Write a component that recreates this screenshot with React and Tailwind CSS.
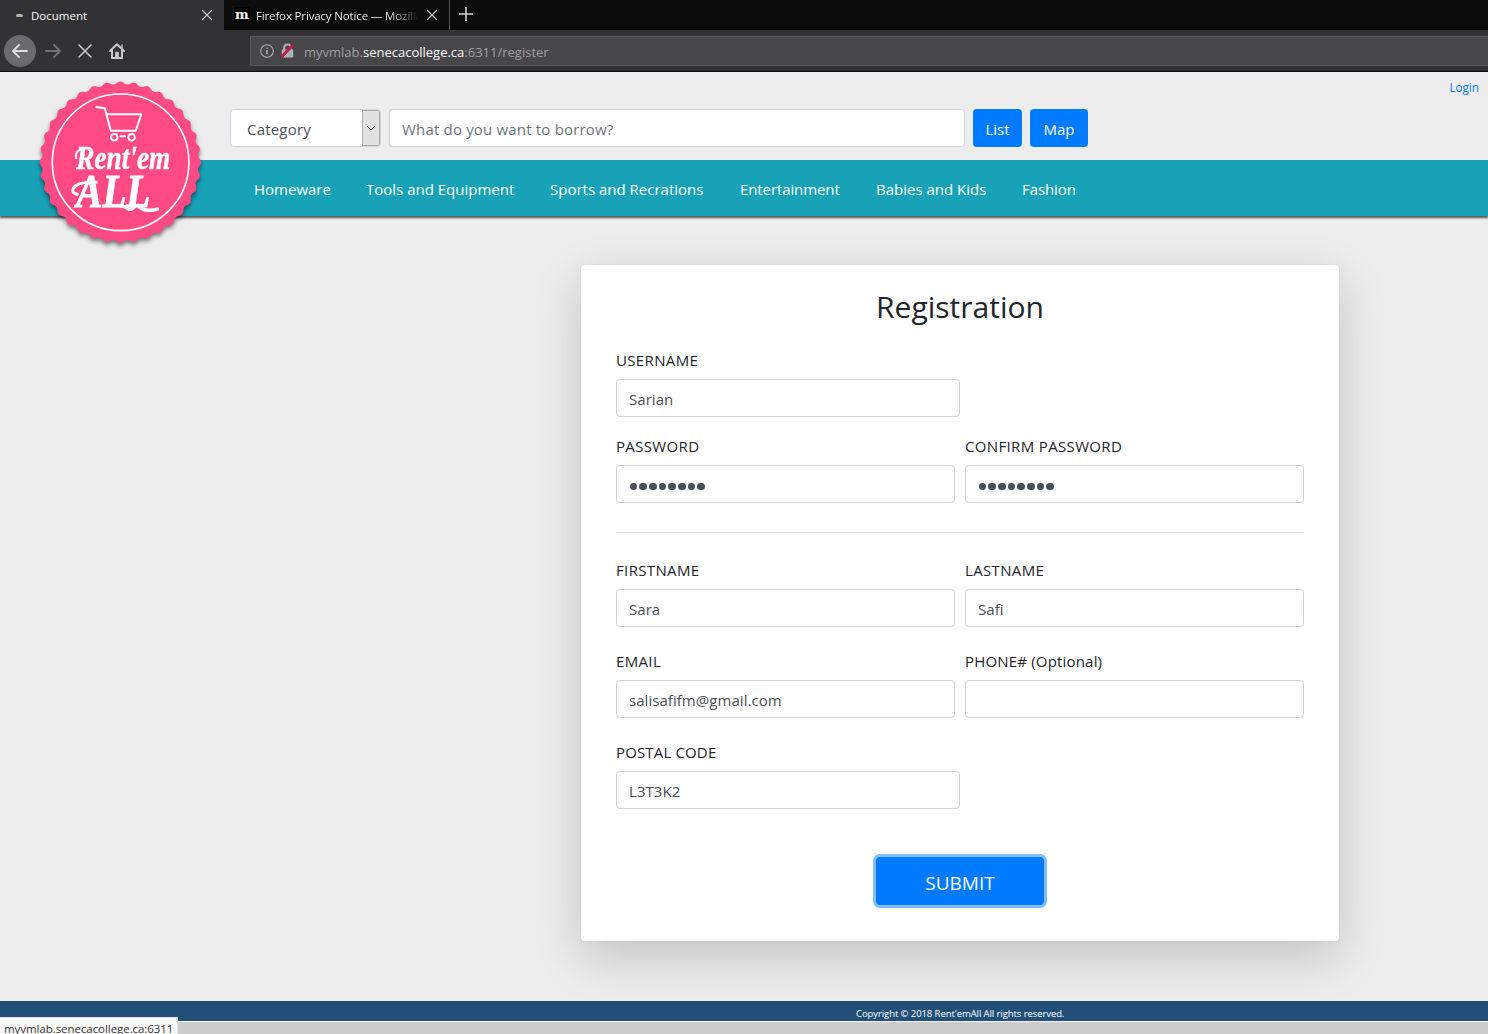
import React from "react";

const badgePoints = Array.from({ length: 432 }, (_, i) => {
  const a = (i / 432) * Math.PI * 2;
  const r = 79.4 + 1.4 * Math.cos(a * 36);
  return `${(90 + r * Math.sin(a)).toFixed(2)},${(90 - r * Math.cos(a)).toFixed(2)}`;
}).join(" ");

function Cross({ className }) {
  return (
    <svg className={className} viewBox="0 0 16 16" fill="none" stroke="currentColor" strokeLinecap="round">
      <path d="M2 2L14 14M14 2L2 14" strokeWidth="1.6" />
    </svg>
  );
}

function Logo() {
  return (
    <svg className="absolute left-[30px] top-0 h-[186px] w-[186px] drop-shadow-[0_3px_2px_rgba(0,0,0,0.5)]" viewBox="-0.3 -0.3 186 186">
      <polygon points={badgePoints} fill="#ff4a84" />
      <circle cx="90.3" cy="90" r="68.3" fill="none" stroke="#fff" strokeWidth="1.6" />
      <g fill="none" stroke="#fff" strokeWidth="2" strokeLinecap="round" strokeLinejoin="round">
        <path d="M66 34.8L74.5 36L80.5 58.5H105.5L111 42H76.8" />
        <circle cx="84" cy="65" r="3.3" />
        <circle cx="101.3" cy="65" r="3.3" />
        <path d="M90.3 64H94.7" />
      </g>
      <g fill="#fff" stroke="#fff" fontFamily="Liberation Serif, serif" fontStyle="italic" fontWeight="700">
        <text x="46" y="96.5" fontSize="33" strokeWidth="0.5" textLength="94" lengthAdjust="spacingAndGlyphs">Rent'em</text>
        <text x="46" y="134.5" fontSize="46" strokeWidth="1" textLength="74" lengthAdjust="spacingAndGlyphs">ALL</text>
      </g>
      <g fill="none" stroke="#fff" strokeLinecap="round">
        <path d="M46 86Q44 77 56 76" strokeWidth="2" />
        <path d="M47 122Q41 121 43 116Q47 109 66 110" strokeWidth="3" />
        <path d="M86 133Q93 133 97 136Q102 139 105 133" strokeWidth="3.2" />
        <path d="M108 133Q112 140 127 137" strokeWidth="3.6" />
      </g>
    </svg>
  );
}

function Browser() {
  return (
    <div className="h-[72px] shrink-0 border-b border-[#0c0c0d] bg-[#323234]">
      <div className="flex h-[30px] bg-[#0c0c0d] text-[11.5px] text-[#f9f9fa]">
        <div className="flex w-[224px] items-center bg-[#323234] pl-4 pr-[11px]">
          <span className="mr-2 h-[3px] w-[7px] rounded-full bg-[#b1b1b3]" />
          <span className="flex-1 pt-[2px]">Document</span>
          <Cross className="h-3 w-3 text-[#c8c8ca]" />
        </div>
        <div className="flex w-[226px] items-center border-r border-[#55555a] pl-[10px] pr-[10px]">
          <span className="mr-[6px] flex h-4 w-4 items-center justify-center bg-black pb-[2px] font-['DejaVu_Serif',serif] text-[13px] font-bold leading-none">m</span>
          <span className="w-[163px] overflow-hidden whitespace-nowrap bg-linear-to-r from-white from-82% to-transparent bg-clip-text pt-[2px] tracking-[-0.15px] text-transparent">Firefox Privacy Notice — Mozilla</span>
          <Cross className="ml-[7px] h-3 w-3 shrink-0 text-[#c8c8ca]" />
        </div>
        <svg className="ml-2 mt-[6px] h-4 w-4 text-[#d0d0d2]" viewBox="0 0 16 16" fill="none" stroke="currentColor" strokeWidth="1.6"><path d="M8 1V15M1 8H15" /></svg>
      </div>
      <div className="flex h-[41px] items-center pl-1">
        <div className="flex h-8 w-8 items-center justify-center rounded-full bg-[#6b6b6d] text-[#dededf]">
          <svg className="h-4 w-4" viewBox="0 0 16 16" fill="none" stroke="currentColor" strokeWidth="1.8" strokeLinecap="round" strokeLinejoin="round"><path d="M15 8H1M7 2L1 8L7 14" /></svg>
        </div>
        <svg className="ml-[9px] h-4 w-4 text-[#737375]" viewBox="0 0 16 16" fill="none" stroke="currentColor" strokeWidth="1.8" strokeLinecap="round" strokeLinejoin="round"><path d="M1 8H15M9 2L15 8L9 14" /></svg>
        <Cross className="ml-4 h-4 w-4 text-[#c8c8ca]" />
        <svg className="ml-4 h-4 w-4 text-[#c8c8ca]" viewBox="0 0 16 16" fill="none" stroke="currentColor" strokeWidth="2" strokeLinejoin="round" strokeLinecap="round">
          <path d="M1 8L8 1.2L15 8M3 7.5V15H13V7.5" />
          <path d="M6.7 14V9.2H9.3V14" fill="currentColor" strokeWidth="1" />
          <path d="M13 2V5" strokeWidth="1.4" />
        </svg>
        <div className="ml-[125px] flex h-[30px] flex-1 items-center border border-r-0 border-[#59595b] bg-[#474749] pl-[9px]">
          <svg className="h-[14px] w-[14px] text-[#b1b1b3]" viewBox="0 0 14 14" fill="none" stroke="currentColor"><circle cx="7" cy="7" r="6.3" strokeWidth="1.1" /><path d="M7 6V10.3M7 3.4V4.8" strokeWidth="1.6" /></svg>
          <svg className="ml-[6px] h-[15px] w-[15px]" viewBox="0 0 15 15" fill="none">
            <path d="M4.2 7V4.7Q4.2 1.5 7.5 1.5Q10.8 1.5 10.8 4.7V7" stroke="#b1b1b3" strokeWidth="2" />
            <rect x="1.7" y="6.5" width="11.6" height="8" rx="1" fill="#b1b1b3" />
            <path d="M2 15L14.2 2.2" stroke="#474749" strokeWidth="1" />
            <path d="M1 14L13.5 1" stroke="#d70b42" strokeWidth="2.2" />
          </svg>
          <span className="ml-[9px] pt-[4px] text-[13px] text-[#a0a0a2]"><span>myvmlab.</span><span className="text-[#f9f9fa]">senecacollege.ca</span><span>:6311/register</span></span>
        </div>
      </div>
    </div>
  );
}

const links = [
  ["Homeware", "w-[76px]"],
  ["Tools and Equipment", "w-[148px]"],
  ["Sports and Recrations", "w-[154px]"],
  ["Entertainment", "w-[100px] tracking-[-0.1px]"],
  ["Babies and Kids", "w-[110px]"],
  ["Fashion", "w-[54px] tracking-[-0.1px]"],
];

function Header() {
  return (
    <header className="relative h-[145px] shrink-0">
      <a className="absolute right-[9px] top-[6px] text-[11.7px] leading-[18px] text-[#007bff]">Login</a>
      <div className="flex h-[88px] items-start pl-[230px] pt-[37px] text-[15px]">
        <div className="flex h-[38px] w-[151px] overflow-hidden rounded-[4px] border border-[#ced4da] bg-white text-[#495057]">
          <span className="flex-1 pl-4 leading-[38px] tracking-[0.2px]">Category</span>
          <span className="flex w-[18px] items-center justify-center border border-[#a9a9ab] bg-[#e1e1e1]">
            <svg className="h-2 w-[10px]" viewBox="0 0 10 8" fill="none" stroke="#444"><path d="M1 2L5 6L9 2" /></svg>
          </span>
        </div>
        <div className="ml-2 h-[38px] w-[576px] rounded-[4px] border border-[#ced4da] bg-white pl-3 leading-[38px] tracking-[0.18px] text-[#6c757d]">What do you want to borrow?</div>
        <button className="ml-2 h-[38px] w-[49px] rounded-[4px] bg-[#007bff] pt-[3px] text-white">List</button>
        <button className="ml-2 h-[38px] w-[58px] rounded-[4px] bg-[#007bff] pt-[3px] text-white">Map</button>
      </div>
      <nav className="flex h-14 items-center gap-9 bg-[#17a2b8] pl-[254px] pt-[3px] text-[15px] text-white shadow-[0_2px_2px_rgba(0,0,0,0.65)]">
        {links.map(([text, width]) => <a key={text} className={`${width} whitespace-nowrap`}>{text}</a>)}
      </nav>
      <Logo />
    </header>
  );
}

function Field({ label, value, type = "text", className = "", tracking = "tracking-[0.35px]" }) {
  return (
    <label className={`block ${className}`}>
      <span className={`block h-[29px] text-[15px] leading-[20px] text-[#212529] ${tracking}`}>{label}</span>
      {type === "password" ? (
        <span className="flex h-[38px] items-center gap-[2px] rounded-[4px] border border-[#ced4da] bg-white pl-[12.5px] pt-[5px]">
          {Array.from({ length: 8 }, (_, i) => <i key={i} className="h-[7.7px] w-[7.7px] rounded-full bg-[#495057]" />)}
        </span>
      ) : (
        <span className="block h-[38px] rounded-[4px] border border-[#ced4da] bg-white pl-3 text-[15px] leading-[38px] tracking-[0.05px] text-[#495057]">{value}</span>
      )}
    </label>
  );
}

export default function App() {
  return (
    <div className="relative flex h-[1034px] w-[1488px] flex-col overflow-hidden bg-[#ededed] font-['Open_Sans','Noto_Sans',sans-serif]">
      <Browser />
      <Header />
      <main className="flex-1 pt-12">
        <form className="ml-[581px] h-[676px] w-[758px] rounded-[3px] bg-white px-[35px] pt-5 shadow-[0_16px_48px_rgba(0,0,0,0.18),0_0_1px_rgba(0,0,0,0.25)]">
          <h1 className="h-[65px] text-center text-[30px] leading-[44px] text-[#212529]">Registration</h1>
          <Field label="USERNAME" value="Sarian" className="w-[344px]" />
          <div className="mt-[19px] grid grid-cols-2 gap-x-[10px]">
            <Field label="PASSWORD" type="password" />
            <Field label="CONFIRM PASSWORD" type="password" />
          </div>
          <hr className="mt-[29px] border-[#dfe0e1]" />
          <div className="mt-[27px] grid grid-cols-2 gap-x-[10px] gap-y-6">
            <Field label="FIRSTNAME" value="Sara" />
            <Field label="LASTNAME" value="Safi" />
            <Field label="EMAIL" value="salisafifm@gmail.com" />
            <Field label="PHONE# (Optional)" value="" tracking="tracking-[0.18px]" />
          </div>
          <Field label="POSTAL CODE" value="L3T3K2" className="mt-6 w-[344px]" tracking="tracking-[0.15px]" />
          <button type="button" className="mx-auto mt-12 block h-12 w-[168px] rounded-[4px] bg-[#007bff] pt-1 text-[19px] text-white shadow-[0_0_0_3px_#80bdff]">SUBMIT</button>
        </form>
      </main>
      <footer className="flex h-[33px] shrink-0 flex-col bg-[#ccc]">
        <div className="h-5 bg-[#224f78] pl-[856px] pt-[5px] text-[9.5px] leading-[15px] tracking-[-0.08px] text-white">Copyright © 2018 Rent'emAll All rights reserved.</div>
        <div className="h-px bg-[#f4f4f4]" />
      </footer>
      <div className="absolute bottom-0 left-0 h-[17px] w-[178px] overflow-hidden whitespace-nowrap border-r border-t border-[#e5e5e5] bg-[#fafafa] pl-1 pt-[2px] text-[11.5px] leading-[18px] tracking-[-0.06px] text-[#333]">myvmlab.senecacollege.ca:6311</div>
    </div>
  );
}
